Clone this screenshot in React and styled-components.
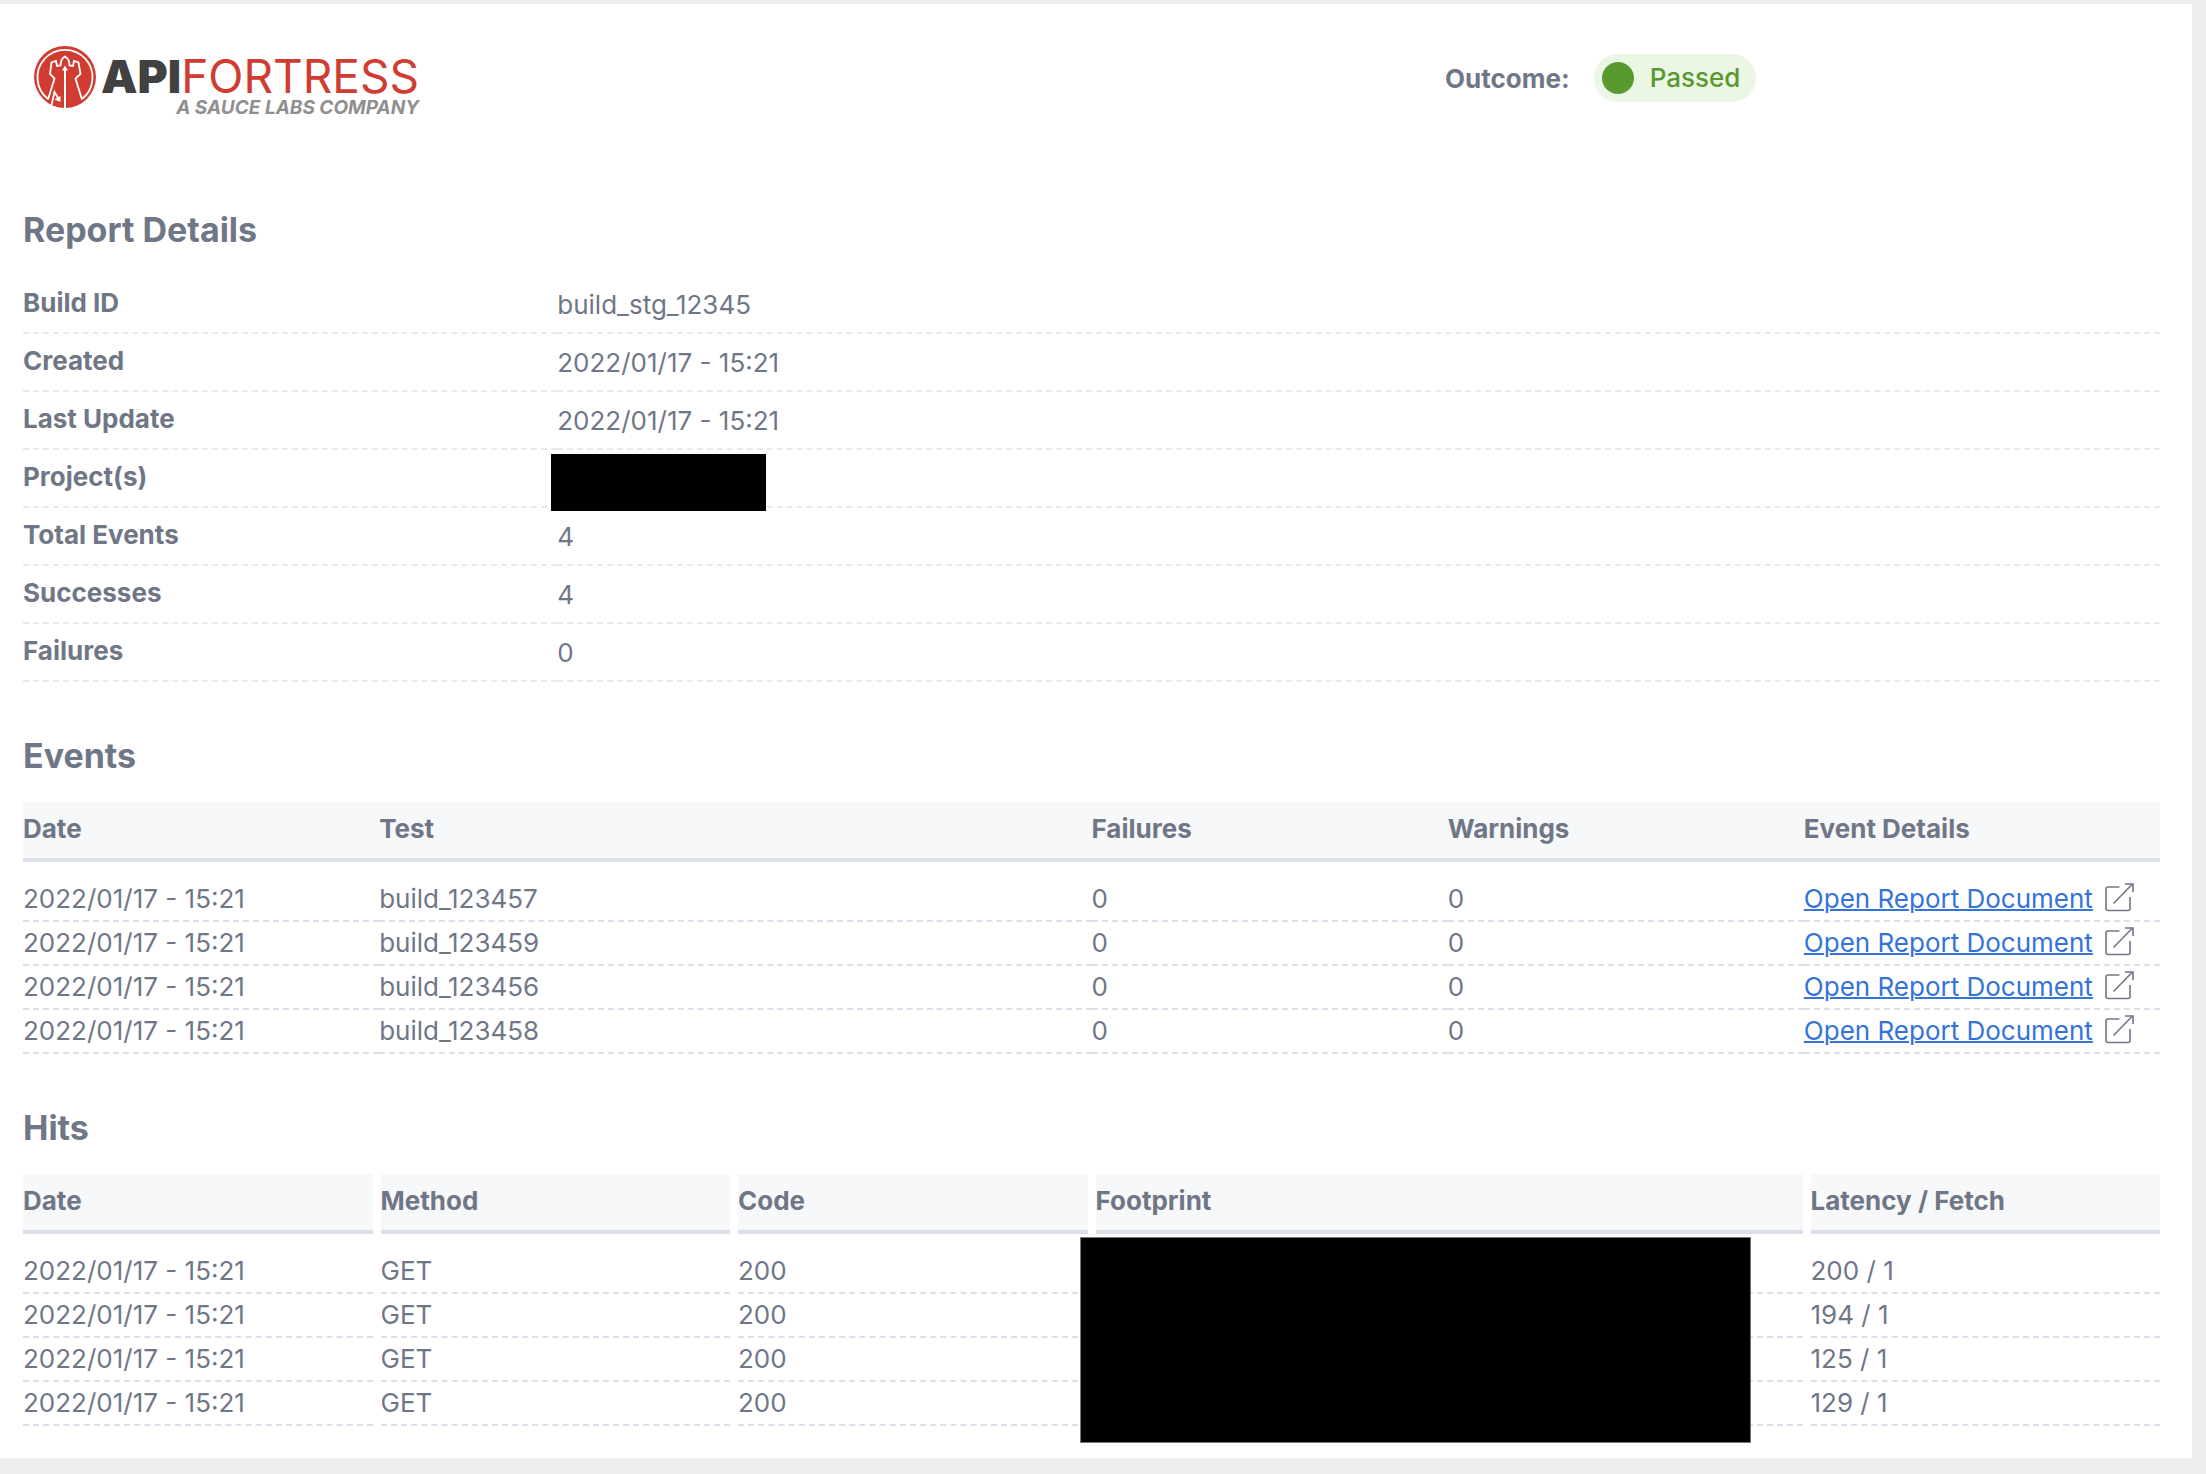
import React from "react";
import styled, { createGlobalStyle } from "styled-components";

const color = {
  page: "#ededed",
  text: "#6f7787",
  head: "#f7f8fa",
  rule: "#dbe0ea",
  softRule: "#e8e9f1",
  link: "#3474da",
  green: "#5a992f",
  greenSoft: "#ebf6e5",
  red: "#d03c32",
};

const GlobalStyle = createGlobalStyle`
  * { box-sizing: border-box; }
  body {
    margin: 0;
    background: ${color.page};
    color: ${color.text};
    font-family: Inter, "Liberation Sans", sans-serif;
    font-size: 26px;
  }
`;

const Frame = styled.div`
  padding: 4px 14px 16px 0;
`;

const Sheet = styled.main`
  background: #fff;
  padding: 42px 32px 32px 23px;
`;

const Header = styled.header`
  display: grid;
  grid-template-columns: 2fr 1fr;
  align-items: start;
  padding: 0 4px 92px 0;
`;

const Brand = styled.div`
  display: flex;
  align-items: flex-start;
  gap: 5px;
  height: 70px;
  padding-left: 11px;
`;

const Wordmark = styled.div`
  display: flex;
  flex-direction: column;
  align-items: flex-end;
  padding-top: 8px;
`;

const BrandName = styled.div`
  font-size: 46px;
  line-height: 44px;
  font-weight: 400;
  color: ${color.red};

  b {
    font-weight: 900;
    color: #414141;
  }
`;

const Tagline = styled.div`
  font-size: 19px;
  line-height: 20px;
  font-weight: 700;
  font-style: italic;
  color: #8f8f8f;
`;

const Outcome = styled.div`
  display: flex;
  align-items: center;
  gap: 24px;
  padding-top: 8px;
  font-weight: 700;
`;

const Pill = styled.span`
  display: flex;
  align-items: center;
  gap: 16px;
  padding: 8px 16px 8px 8px;
  border-radius: 24px;
  line-height: 32px;
  font-weight: 500;
  color: ${color.green};
  background: ${color.greenSoft};
`;

const Dot = styled.span`
  width: 32px;
  height: 32px;
  border-radius: 50%;
  background: ${color.green};
`;

const Section = styled.section`
  & + & {
    margin-top: 52px;
  }
`;

const Title = styled.h2`
  margin: 0 0 24px;
  font-size: 34px;
  line-height: 44px;
  font-weight: 700;
`;

const Details = styled.dl`
  margin: 0;
`;

const Detail = styled.div`
  display: grid;
  grid-template-columns: 1fr 3fr;
  line-height: 54px;

  dt,
  dd {
    margin: 0;
    border-bottom: 2px dashed ${color.softRule};
  }
  dt {
    padding-bottom: 2px;
    font-weight: 700;
  }
  dd {
    position: relative;
    padding-top: 2px;
  }
`;

const Redaction = styled.span`
  position: absolute;
  z-index: 1;
  background: #000;
`;

const ProjectRedaction = styled(Redaction)`
  top: 4px;
  left: -6px;
  width: 215px;
  height: 57px;
`;

const FootprintRedaction = styled(Redaction)`
  top: -13px;
  left: -16px;
  width: 95%;
  height: 206px;
  border: 1px solid #777;
`;

const Table = styled.table`
  display: block;

  thead {
    display: block;
  }
  tbody {
    display: block;
    padding-top: 16px;
  }
  tr {
    display: grid;
    grid-template-columns: repeat(6, 1fr);
    column-gap: ${(p) => p.$gap}px;
  }
`;

const Th = styled.th`
  grid-column: span ${(p) => p.$span || 1};
  padding: 0 0 2px;
  border-bottom: 4px solid ${color.rule};
  background: ${color.head};
  line-height: 54px;
  font-weight: 700;
  text-align: left;
`;

const Td = styled.td`
  position: relative;
  grid-column: span ${(p) => p.$span || 1};
  height: 44px;
  padding: 0;
  border-bottom: 2px dashed ${color.rule};
  line-height: 42px;
`;

const LinkCell = styled.div`
  display: flex;
  align-items: center;
  gap: 12px;
  white-space: nowrap;

  svg {
    margin-bottom: 4px;
  }
`;

const ReportLink = styled.a`
  color: ${color.link};
  text-decoration-thickness: 2px;
`;

function Logo() {
  return (
    <svg width="62" height="62" viewBox="0 0 62 62" role="img" aria-label="API Fortress">
      <circle cx="31" cy="31" r="31" fill={color.red} />
      <g fill="none" stroke="#fff" strokeWidth="1.8">
        <path d="M14 53 A27.500 27.500 0 1 1 48 53" />
        <path d="M14 53.500 L20.500 32.500 L16 28 L17.500 16.500 L22 15 L23 20 L26.500 19.500 C27 13.500 28 12.500 31 10.500 C34 12.500 35 13.500 35.500 19.500 L39 20 L40 15 L44.500 16.500 L46.500 28 L41.500 32.500 L48 53.500" />
        <path d="M17.500 59 L20.500 46 L25 53.500" />
      </g>
      <path d="M31 62 V23" stroke="#fff" strokeWidth="2" />
      <path d="M31 19.500 L34 24.500 H28 Z" fill="#fff" />
      <path d="M26.500 50 V56 L20.500 53.500 Z" fill="#fff" />
    </svg>
  );
}

function OpenIcon() {
  return (
    <svg width="29" height="30" viewBox="0 0 29 30" fill="none" stroke={color.text} strokeWidth="1.6" aria-hidden="true">
      <path d="M14.500 5 H3 Q1 5 1 7 V26.500 Q1 28.500 3 28.500 H23 Q25 28.500 25 26.500 V15" />
      <path d="M8.500 21.500 L27.500 2" />
      <path d="M20 2 H28 V10" />
    </svg>
  );
}

const stamp = "2022/01/17 - 15:21";

const details = [
  ["Build ID", "build_stg_12345"],
  ["Created", stamp],
  ["Last Update", stamp],
  ["Project(s)", null],
  ["Total Events", "4"],
  ["Successes", "4"],
  ["Failures", "0"],
];

const events = ["build_123457", "build_123459", "build_123456", "build_123458"];
const hits = ["200 / 1", "194 / 1", "125 / 1", "129 / 1"];

export default function App() {
  return (
    <Frame>
      <GlobalStyle />
      <Sheet>
        <Header>
          <Brand>
            <Logo />
            <Wordmark>
              <BrandName><b>API</b>FORTRESS</BrandName>
              <Tagline>A SAUCE LABS COMPANY</Tagline>
            </Wordmark>
          </Brand>
          <Outcome>
            <span>Outcome:</span>
            <Pill><Dot />Passed</Pill>
          </Outcome>
        </Header>

        <Section>
          <Title>Report Details</Title>
          <Details>
            {details.map(([label, value]) => (
              <Detail key={label}>
                <dt>{label}</dt>
                <dd>{value ?? <ProjectRedaction />}</dd>
              </Detail>
            ))}
          </Details>
        </Section>

        <Section>
          <Title>Events</Title>
          <Table $gap={0}>
            <thead>
              <tr>
                <Th>Date</Th>
                <Th $span={2}>Test</Th>
                <Th>Failures</Th>
                <Th>Warnings</Th>
                <Th>Event Details</Th>
              </tr>
            </thead>
            <tbody>
              {events.map((test) => (
                <tr key={test}>
                  <Td>{stamp}</Td>
                  <Td $span={2}>{test}</Td>
                  <Td>0</Td>
                  <Td>0</Td>
                  <Td>
                    <LinkCell>
                      <ReportLink href="#report">Open Report Document</ReportLink>
                      <OpenIcon />
                    </LinkCell>
                  </Td>
                </tr>
              ))}
            </tbody>
          </Table>
        </Section>

        <Section>
          <Title>Hits</Title>
          <Table $gap={8}>
            <thead>
              <tr>
                <Th>Date</Th>
                <Th>Method</Th>
                <Th>Code</Th>
                <Th $span={2}>Footprint</Th>
                <Th>Latency / Fetch</Th>
              </tr>
            </thead>
            <tbody>
              {hits.map((latency, i) => (
                <tr key={latency}>
                  <Td>{stamp}</Td>
                  <Td>GET</Td>
                  <Td>200</Td>
                  <Td $span={2}>{i === 0 && <FootprintRedaction />}</Td>
                  <Td>{latency}</Td>
                </tr>
              ))}
            </tbody>
          </Table>
        </Section>
      </Sheet>
    </Frame>
  );
}
